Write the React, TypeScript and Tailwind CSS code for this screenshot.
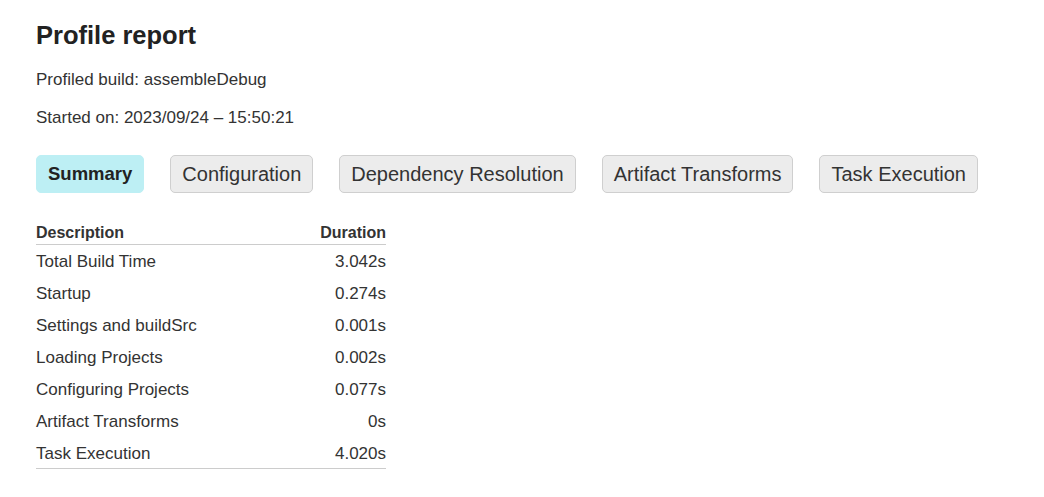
const rows: [string, string][] = [
  ["Total Build Time", "3.042s"],
  ["Startup", "0.274s"],
  ["Settings and buildSrc", "0.001s"],
  ["Loading Projects", "0.002s"],
  ["Configuring Projects", "0.077s"],
  ["Artifact Transforms", "0s"],
  ["Task Execution", "4.020s"],
];

const tabs = ["Summary", "Configuration", "Dependency Resolution", "Artifact Transforms", "Task Execution"];

export default function App() {
  return (
    <div className="min-h-screen bg-white pl-[36px] pt-[20px] text-[#333] font-['Liberation_Sans',Arial,sans-serif]">
      <h1 className="text-[25.5px] leading-[30px] font-bold text-[#222]">Profile report</h1>
      <p className="mt-[19px] text-[17px] leading-[22px]">Profiled build: assembleDebug</p>
      <p className="mt-[16px] text-[17px] leading-[22px]">Started on: 2023/09/24 – 15:50:21</p>

      <div className="mt-[26px] flex gap-[26px]">
        {tabs.map((t, i) => (
          <div
            key={t}
            className={
              i === 0
                ? "h-[38px] px-[11px] flex items-center rounded-[5px] border border-[#bdeff4] bg-[#bdeff4] text-[18.5px] font-bold text-[#222]"
                : "h-[38px] px-[11px] flex items-center rounded-[5px] border border-[#cfcfcf] bg-[#ececec] text-[20px] text-[#333]"
            }
          >
            {t}
          </div>
        ))}
      </div>

      <table className="mt-[29px] w-[350px] text-[17px] border-collapse">
        <thead>
          <tr className="border-b border-[#cccccc]">
            <th className="h-[22px] p-0 text-left text-[16px] font-bold align-top leading-[22px]">Description</th>
            <th className="h-[22px] p-0 text-right text-[16px] font-bold align-top leading-[22px]">Duration</th>
          </tr>
        </thead>
        <tbody className="border-b border-[#cccccc]">
          {rows.map(([d, v]) => (
            <tr key={d} className="h-[32px]">
              <td className="p-0 pt-[2px] text-left">{d}</td>
              <td className="p-0 pt-[2px] text-right">{v}</td>
            </tr>
          ))}
        </tbody>
      </table>
    </div>
  );
}
